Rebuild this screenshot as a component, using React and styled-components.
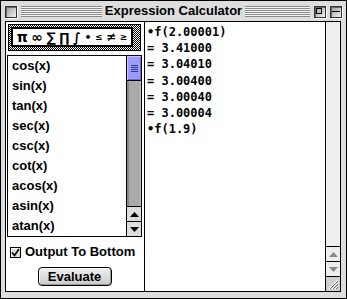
import React from 'react';
import styled, { createGlobalStyle } from 'styled-components';

const Global = createGlobalStyle`
  html, body { margin: 0; padding: 0; background: #fff; }
  * { box-sizing: border-box; }
`;

const Window = styled.div`
  width: 347px;
  height: 299px;
  border: 1px solid #000;
  background: #dddddd;
  display: flex;
  flex-direction: column;
  font-family: "Liberation Sans", Arial, sans-serif;
  font-weight: 700;
  color: #000;
`;

const TitleBar = styled.div`
  height: 20px;
  display: grid;
  grid-template-columns: 1fr auto 1fr;
  align-items: center;
  padding: 0 4px 0 4px;
`;

const Side = styled.div`
  display: flex;
  align-items: center;
  gap: 4px;
`;

const Stripes = styled.div`
  flex: 1;
  height: 11px;
  margin-top: 1px;
  background: repeating-linear-gradient(to bottom, #8a8a8a 0 1px, #f4f4f4 1px 2px);
`;

const Box = styled.div`
  width: 12px;
  height: 12px;
  border: 1px solid #333;
  background: linear-gradient(135deg, #9a9a9a, #f2f2f2);
  box-shadow: 1px 1px 0 #fff, inset 1px 1px 0 #666;
  position: relative;
  margin-top: 1px;
`;

const ZoomMark = styled.div`
  position: absolute;
  left: 1px;
  top: 1px;
  width: 6px;
  height: 6px;
  border: 1px solid #000;
`;

const CollapseMark = styled.div`
  position: absolute;
  left: 1px;
  right: 1px;
  top: 4px;
  height: 1px;
  background: #000;
`;

const Title = styled.div`
  font-size: 13px;
  padding: 0 3px;
  white-space: nowrap;
  line-height: 20px;
`;

const Body = styled.div`
  flex: 1;
  margin: 0 5px 6px 4px;
  border: 1px solid #000;
  background: #fff;
  display: flex;
`;

const LeftPanel = styled.div`
  width: 139px;
  border-right: 1px solid #000;
  display: flex;
  flex-direction: column;
  padding: 2px 2px 0 1px;
`;

const Palette = styled.div`
  margin-left: 1px;
  width: 133px;
  height: 27px;
  border: 1px solid #000;
  padding: 2px 7px 3px 2px;
  background: repeating-conic-gradient(#000 0 25%, #fff 0 50%) 0 0 / 2px 2px;
`;

const PaletteInner = styled.div`
  height: 100%;
  border: 2px solid #000;
  background: #fff;
  display: flex;
  align-items: center;
  justify-content: space-around;
  padding: 0 2px;
  font-family: "DejaVu Sans", "Liberation Sans", sans-serif;
  font-weight: 700;
  line-height: 1;
`;

const Sym = styled.span`
  font-size: ${p => p.$size || 13}px;
`;

const List = styled.div`
  margin-top: 4px;
  width: 135px;
  height: 182px;
  border: 1px solid #000;
  display: flex;
`;

const Items = styled.div`
  flex: 1;
  padding-left: 4px;
`;

const Item = styled.div`
  height: 20px;
  line-height: 20px;
  font-size: 13px;
`;

const ScrollCol = styled.div`
  width: 15px;
  border-left: 1px solid #000;
  display: flex;
  flex-direction: column;
  background: ${p => p.$bg};
`;

const Thumb = styled.div`
  height: 25px;
  background: #9c9cff;
  border-bottom: 1px solid #000;
  box-shadow: inset 1px 1px 0 #c8c8ff, inset -1px -1px 0 #6a6acc;
  display: flex;
  flex-direction: column;
  align-items: center;
  justify-content: center;
  gap: 1px;
`;

const Ridge = styled.div`
  width: 7px;
  height: 1px;
  background: #33339a;
`;

const Track = styled.div`
  flex: 1;
  background: ${p => p.$bg};
  box-shadow: ${p => (p.$shade ? 'inset 2px 0 0 #888, inset -1px 0 0 #c4c4c4' : 'none')};
`;

const Arrow = styled.div`
  height: 15px;
  border-top: 1px solid #000;
  background: ${p => p.$bg};
  display: flex;
  align-items: center;
  justify-content: center;
`;

const Check = styled.label`
  display: flex;
  align-items: center;
  gap: 4px;
  margin: 8px 0 0 3px;
  font-size: 13px;
  line-height: 14px;
`;

const CheckBox = styled.span`
  width: 11px;
  height: 11px;
  border: 1px solid #000;
  background: #dcdcdc;
  box-shadow: inset 1px 1px 0 #fff;
  display: flex;
  align-items: center;
  justify-content: center;
`;

const Button = styled.button`
  align-self: center;
  margin-top: 8px;
  width: 74px;
  height: 19px;
  border: 1px solid #000;
  border-radius: 4px;
  background: linear-gradient(#f2f2f2, #c8c8c8);
  box-shadow: inset 1px 1px 0 #fff, inset -1px -1px 0 #999;
  font-family: "Liberation Sans", Arial, sans-serif;
  font-weight: 700;
  font-size: 13px;
  padding: 0;
  color: #000;
`;

const Output = styled.div`
  flex: 1;
  padding: 2px 0 0 2px;
  font-family: "DejaVu Sans Mono", "Liberation Mono", monospace;
  font-size: 12px;
  font-weight: 700;
  line-height: 16.2px;
  white-space: pre;
`;

const Grow = styled.div`
  height: 15px;
  border-top: 1px solid #000;
  background: #cfcfcf;
  display: flex;
  align-items: center;
  justify-content: center;
`;

const Tri = ({ up, color = '#000' }) => (
  <svg width="9" height="5" viewBox="0 0 9 5">
    <path d={up ? 'M4.5 0 L9 5 L0 5 Z' : 'M0 0 L9 0 L4.5 5 Z'} fill={color} />
  </svg>
);

const funcs = ['cos(x)', 'sin(x)', 'tan(x)', 'sec(x)', 'csc(x)', 'cot(x)', 'acos(x)', 'asin(x)', 'atan(x)'];
const lines = ['\u2022f(2.00001)', '= 3.41000', '= 3.04010', '= 3.00400', '= 3.00040', '= 3.00004', '\u2022f(1.9)'];

export default function App() {
  return (
    <>
      <Global />
      <Window>
        <TitleBar>
          <Side>
            <Box />
            <Stripes />
          </Side>
          <Title>Expression Calculator</Title>
          <Side>
            <Stripes />
            <Box><ZoomMark /></Box>
            <Box><CollapseMark /></Box>
          </Side>
        </TitleBar>
        <Body>
          <LeftPanel>
            <Palette>
              <PaletteInner>
                <Sym $size={14}>π</Sym>
                <Sym $size={14}>∞</Sym>
                <Sym>∑</Sym>
                <Sym>∏</Sym>
                <Sym>∫</Sym>
                <Sym $size={11}>•</Sym>
                <Sym $size={9}>≤</Sym>
                <Sym $size={12}>≠</Sym>
                <Sym $size={9}>≥</Sym>
              </PaletteInner>
            </Palette>
            <List>
              <Items>
                {funcs.map(f => <Item key={f}>{f}</Item>)}
              </Items>
              <ScrollCol $bg="#aaa">
                <Thumb>
                  <Ridge /><Ridge /><Ridge /><Ridge />
                </Thumb>
                <Track $bg="#aaaaaa" $shade />
                <Arrow $bg="#dddddd"><Tri up /></Arrow>
                <Arrow $bg="#dddddd"><Tri /></Arrow>
              </ScrollCol>
            </List>
            <Check>
              <CheckBox>
                <svg width="9" height="9" viewBox="0 0 9 9">
                  <path d="M1 4.5 L3.5 7.5 L8 1" stroke="#000" strokeWidth="1.6" fill="none" />
                </svg>
              </CheckBox>
              Output To Bottom
            </Check>
            <Button>Evaluate</Button>
          </LeftPanel>
          <Output>{lines.join('\n')}</Output>
          <ScrollCol $bg="#eeeeee">
            <Track $bg="#eeeeee" />
            <Arrow $bg="#eeeeee"><Tri up color="#888" /></Arrow>
            <Arrow $bg="#eeeeee"><Tri color="#888" /></Arrow>
            <Grow>
              <svg width="11" height="11" viewBox="0 0 11 11">
                <path d="M1 10 L10 1 M4 10 L10 4 M7 10 L10 7" stroke="#fff" strokeWidth="1.2" />
                <path d="M2 10 L10 2 M5 10 L10 5 M8 10 L10 8" stroke="#777" strokeWidth="1" />
              </svg>
            </Grow>
          </ScrollCol>
        </Body>
      </Window>
    </>
  );
}
